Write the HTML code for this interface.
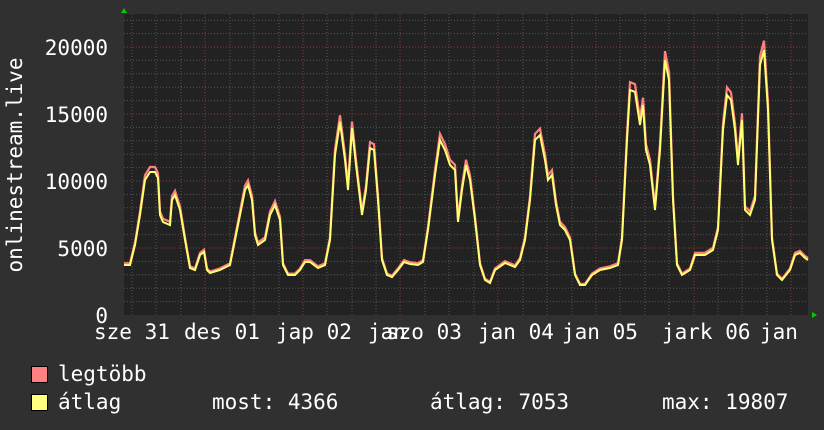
<!DOCTYPE html><html><head><style>
body{margin:0;background:#303030;width:824px;height:430px;overflow:hidden;position:relative;font-family:"DejaVu Sans Mono","Liberation Mono",monospace;color:#fff}
.t{position:absolute;font-size:21px;line-height:1;white-space:pre}
.yl{position:absolute;right:716px;font-size:21px;line-height:1}
.sq{position:absolute;width:15px;height:15px;border:1px solid #000}
</style></head><body>
<svg width="824" height="430" style="position:absolute;left:0;top:0">
<rect x="124" y="14" width="684" height="301" fill="#222"/>
<g stroke="#555" stroke-width="1" stroke-dasharray="1,2">
<path d="M124 301.6H808M124 288.2H808M124 274.8H808M124 261.4H808M124 234.6H808M124 221.2H808M124 207.8H808M124 194.4H808M124 167.6H808M124 154.2H808M124 140.8H808M124 127.4H808M124 100.6H808M124 87.2H808M124 73.8H808M124 60.4H808M124 33.6H808M124 20.2H808"/>
<path d="M132 14V315M156 14V315M181 14V315M230 14V315M254 14V315M279 14V315M327 14V315M352 14V315M376 14V315M425 14V315M449 14V315M474 14V315M523 14V315M547 14V315M572 14V315M620 14V315M645 14V315M669 14V315M718 14V315M742 14V315M767 14V315"/>
</g>
<g stroke="#8a3a3a" stroke-width="1" stroke-dasharray="1,2">
<path d="M124 248H808M124 181H808M124 114H808M124 47H808"/>
<path d="M205 14V315M303 14V315M400 14V315M498 14V315M596 14V315M694 14V315M791 14V315"/>
</g>
<polyline fill="none" stroke="#ff8080" stroke-width="2.2" transform="translate(0,315) scale(1,1.035) translate(0,-315)" points="124,265 130,265 135,245 140,215 145,180 150,172 155,172 158,178 160,215 163,222 170,225 172,200 175,195 180,210 185,240 190,268 195,270 200,255 204,252 207,270 210,273 220,270 230,265 235,240 240,215 245,190 248,185 252,200 255,235 258,245 265,240 270,215 275,205 280,220 283,265 288,275 295,275 300,270 305,262 310,262 318,268 325,265 330,240 335,155 340,122 345,160 348,190 352,128 356,165 362,215 366,190 370,148 374,150 378,200 382,260 387,275 392,277 398,270 404,262 410,264 418,265 423,262 428,230 435,175 440,140 445,150 450,165 455,170 458,222 462,190 466,165 470,180 475,220 480,265 485,280 490,283 495,270 505,263 515,267 520,260 525,240 530,200 535,140 540,135 545,160 548,180 552,175 556,205 560,225 565,230 570,240 575,275 580,285 585,285 592,275 600,270 610,268 618,265 622,240 627,140 630,90 635,92 640,125 643,105 646,150 650,165 655,210 660,150 665,60 669,80 673,200 677,265 682,275 690,270 695,255 705,255 713,250 718,230 723,130 727,95 731,100 735,130 738,165 742,120 745,210 750,215 755,200 760,65 764,50 768,110 772,240 777,275 782,280 790,270 795,255 800,253 805,258 808,260"/>
<polyline fill="none" stroke="#ffff70" stroke-width="2" points="124,265 130,265 135,245 140,215 145,180 150,172 155,172 158,178 160,215 163,222 170,225 172,200 175,195 180,210 185,240 190,268 195,270 200,255 204,252 207,270 210,273 220,270 230,265 235,240 240,215 245,190 248,185 252,200 255,235 258,245 265,240 270,215 275,205 280,220 283,265 288,275 295,275 300,270 305,262 310,262 318,268 325,265 330,240 335,155 340,122 345,160 348,190 352,128 356,165 362,215 366,190 370,148 374,150 378,200 382,260 387,275 392,277 398,270 404,262 410,264 418,265 423,262 428,230 435,175 440,140 445,150 450,165 455,170 458,222 462,190 466,165 470,180 475,220 480,265 485,280 490,283 495,270 505,263 515,267 520,260 525,240 530,200 535,140 540,135 545,160 548,180 552,175 556,205 560,225 565,230 570,240 575,275 580,285 585,285 592,275 600,270 610,268 618,265 622,240 627,140 630,90 635,92 640,125 643,105 646,150 650,165 655,210 660,150 665,60 669,80 673,200 677,265 682,275 690,270 695,255 705,255 713,250 718,230 723,130 727,95 731,100 735,130 738,165 742,120 745,210 750,215 755,200 760,65 764,50 768,110 772,240 777,275 782,280 790,270 795,255 800,253 805,258 808,260"/>
<path d="M121 13L124 8L127 13Z" fill="#0c0"/>
<path d="M812 312L817 315L812 318Z" fill="#0c0"/>
<text x="22" y="165" fill="#fff" font-size="21" font-family="DejaVu Sans Mono,monospace" text-anchor="middle" transform="rotate(-90 22 165)">onlinestream.live</text>
</svg>
<div class="yl" style="top:38px">20000</div>
<div class="yl" style="top:105px">15000</div>
<div class="yl" style="top:172px">10000</div>
<div class="yl" style="top:239px">5000</div>
<div class="yl" style="top:306px">0</div>
<div class="t" style="left:94px;top:322px">sze 31</div>
<div class="t" style="left:184px;top:322px">des 01</div>
<div class="t" style="left:276px;top:322px">jap 02</div>
<div class="t" style="left:368px;top:322px">jan</div>
<div class="t" style="left:386px;top:322px">szo 03</div>
<div class="t" style="left:478px;top:322px">jan 04</div>
<div class="t" style="left:562px;top:322px">jan 05</div>
<div class="t" style="left:662px;top:322px">jark 06</div>
<div class="t" style="left:760px;top:322px">jan</div>
<div class="sq" style="left:31px;top:366px;background:#ff8080"></div>
<div class="sq" style="left:31px;top:394px;background:#ffff80"></div>
<div class="t" style="left:58px;top:364px">legtöbb</div>
<div class="t" style="left:58px;top:392px">átlag</div>
<div class="t" style="left:212px;top:392px">most: 4366</div>
<div class="t" style="left:430px;top:392px">átlag: 7053</div>
<div class="t" style="left:662px;top:392px">max: 19807</div>
</body></html>
